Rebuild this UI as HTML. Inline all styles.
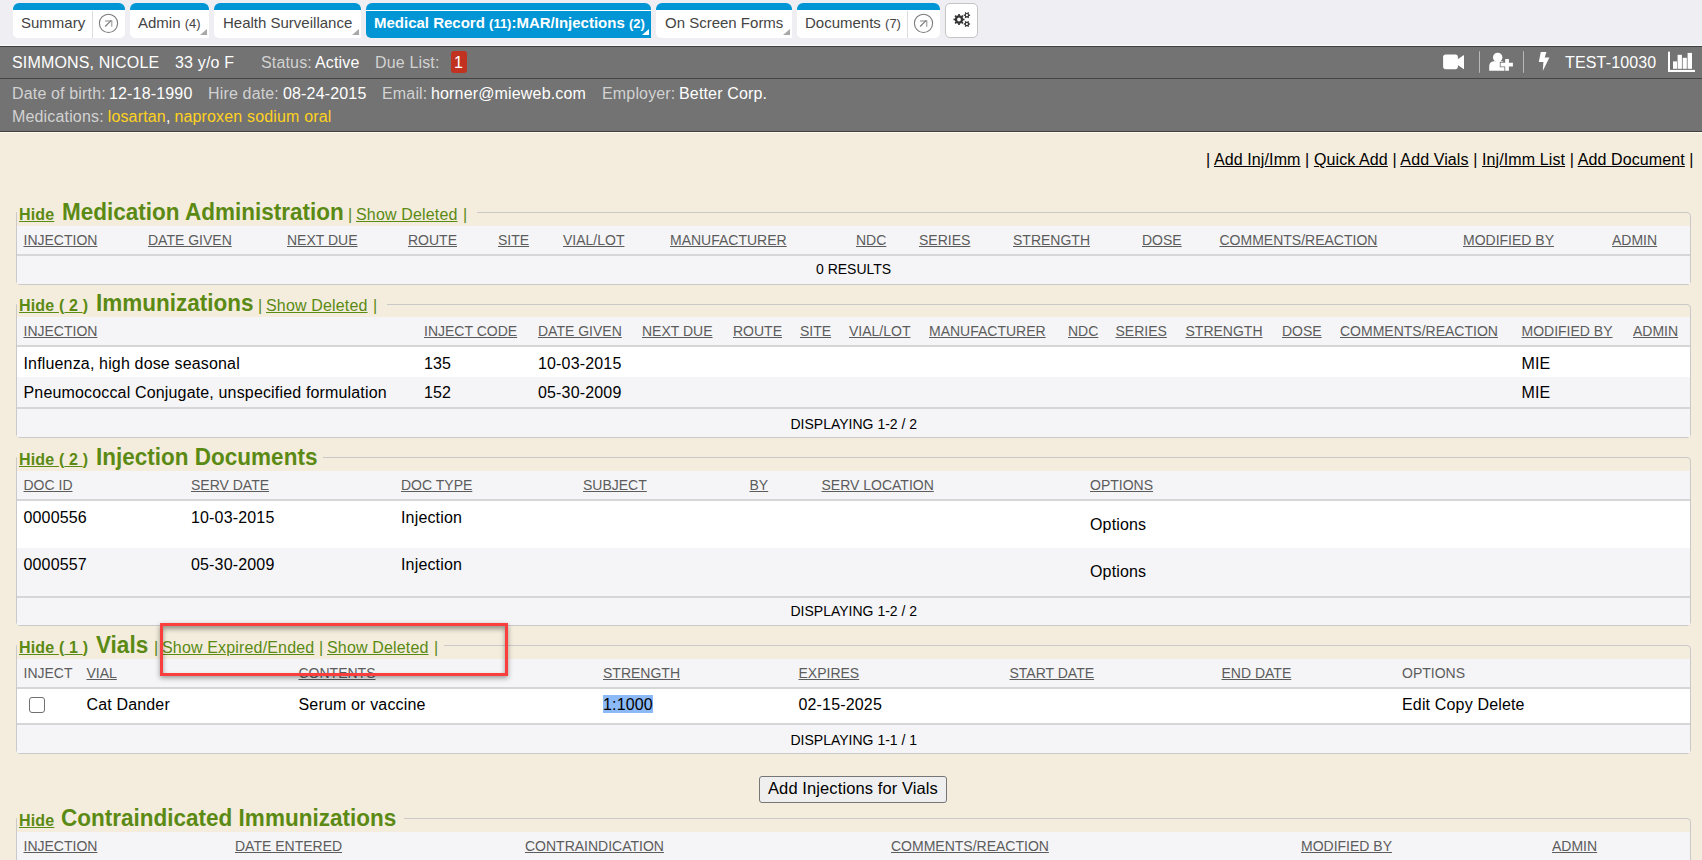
<!DOCTYPE html>
<html><head><meta charset="utf-8"><style>
html,body{margin:0;padding:0;width:1702px;height:860px;overflow:hidden;background:#f4eddd;font-family:"Liberation Sans",sans-serif;}
.t{position:absolute;white-space:nowrap;}
.r{position:absolute;}
u{text-decoration:underline;}
</style></head><body>
<div class="r" style="left:0px;top:0px;width:1702px;height:45px;background:#efeef3;"></div>
<div class="r" style="left:0px;top:45px;width:1702px;height:1px;background:#fbfbfd;"></div>
<div class="r" style="left:13px;top:3px;width:112px;height:35px;background:#fff;border-radius:6px 6px 5px 5px;overflow:hidden;"></div>
<div class="r" style="left:13px;top:3px;width:112px;height:7px;background:#0096d6;border-radius:6px 6px 0 0;"></div>
<div class="r" style="left:92px;top:11px;width:1px;height:27px;background:#dcdcdc;"></div>
<svg class="r" style="left:98.0px;top:13px" width="21" height="21" viewBox="0 0 21 21"><circle cx="10.5" cy="10.35" r="9.1" fill="none" stroke="#7a7a7a" stroke-width="1.1"/><path d="M7.1 7.9 H13.7 V13.7" fill="none" stroke="#b0b0b0" stroke-width="1.5"/><path d="M7.1 13.5 L13.3 7.3" fill="none" stroke="#7a7a7a" stroke-width="1.1"/></svg>

<div class="t" style="left:21px;top:15px;font-size:15px;line-height:15px;color:#444;">Summary</div>
<div class="r" style="left:130px;top:3px;width:79px;height:35px;background:#fff;border-radius:6px 6px 0px 5px;overflow:hidden;"></div>
<div class="r" style="left:130px;top:3px;width:79px;height:7px;background:#0096d6;border-radius:6px 6px 0 0;"></div>
<div class="r" style="left:200px;top:29px;width:0;height:0;border-left:7px solid transparent;border-bottom:6px solid #a8a8a8;"></div>

<div class="t" style="left:138px;top:15px;font-size:15px;line-height:15px;color:#444;">Admin <span style="font-size:13px">(4)</span></div>
<div class="r" style="left:214px;top:3px;width:147px;height:35px;background:#fff;border-radius:6px 6px 0px 5px;overflow:hidden;"></div>
<div class="r" style="left:214px;top:3px;width:147px;height:7px;background:#0096d6;border-radius:6px 6px 0 0;"></div>
<div class="r" style="left:352px;top:29px;width:0;height:0;border-left:7px solid transparent;border-bottom:6px solid #a8a8a8;"></div>

<div class="t" style="left:223px;top:15px;font-size:15px;line-height:15px;color:#444;">Health Surveillance</div>
<div class="r" style="left:366px;top:3px;width:285px;height:35px;background:#0096d6;border-radius:6px 6px 0px 5px;overflow:hidden;"></div>
<div class="r" style="left:366px;top:10px;width:285px;height:1px;background:#fff;"></div>
<div class="r" style="left:642px;top:29px;width:0;height:0;border-left:7px solid transparent;border-bottom:6px solid #fff;"></div>

<div class="t" style="left:374px;top:15px;font-size:15px;line-height:15px;color:#fff;font-weight:bold;">Medical Record <span style="font-size:13px">(11)</span>:MAR/Injections <span style="font-size:13px">(2)</span></div>
<div class="r" style="left:656px;top:3px;width:136px;height:35px;background:#fff;border-radius:6px 6px 0px 5px;overflow:hidden;"></div>
<div class="r" style="left:656px;top:3px;width:136px;height:7px;background:#0096d6;border-radius:6px 6px 0 0;"></div>
<div class="r" style="left:783px;top:29px;width:0;height:0;border-left:7px solid transparent;border-bottom:6px solid #a8a8a8;"></div>

<div class="t" style="left:665px;top:15px;font-size:15px;line-height:15px;color:#444;">On Screen Forms</div>
<div class="r" style="left:797px;top:3px;width:143px;height:35px;background:#fff;border-radius:6px 6px 5px 5px;overflow:hidden;"></div>
<div class="r" style="left:797px;top:3px;width:143px;height:7px;background:#0096d6;border-radius:6px 6px 0 0;"></div>
<div class="r" style="left:907px;top:11px;width:1px;height:27px;background:#dcdcdc;"></div>
<svg class="r" style="left:913.0px;top:13px" width="21" height="21" viewBox="0 0 21 21"><circle cx="10.5" cy="10.35" r="9.1" fill="none" stroke="#7a7a7a" stroke-width="1.1"/><path d="M7.1 7.9 H13.7 V13.7" fill="none" stroke="#b0b0b0" stroke-width="1.5"/><path d="M7.1 13.5 L13.3 7.3" fill="none" stroke="#7a7a7a" stroke-width="1.1"/></svg>

<div class="t" style="left:805px;top:15px;font-size:15px;line-height:15px;color:#444;">Documents <span style="font-size:13px">(7)</span></div>
<div class="r" style="left:945px;top:3px;width:31px;height:33px;background:#fff;border:1px solid #c4c4c4;border-radius:5px;"></div>
<svg class="r" style="left:950px;top:8px" width="24" height="22" viewBox="0 0 24 22"><circle cx="9" cy="11.5" r="3.05" fill="none" stroke="#333" stroke-width="2.30"/><rect x="8.15" y="6.00" width="1.7" height="1.90" fill="#333" transform="rotate(0.0 9 11.5)"/><rect x="8.15" y="6.00" width="1.7" height="1.90" fill="#333" transform="rotate(45.0 9 11.5)"/><rect x="8.15" y="6.00" width="1.7" height="1.90" fill="#333" transform="rotate(90.0 9 11.5)"/><rect x="8.15" y="6.00" width="1.7" height="1.90" fill="#333" transform="rotate(135.0 9 11.5)"/><rect x="8.15" y="6.00" width="1.7" height="1.90" fill="#333" transform="rotate(180.0 9 11.5)"/><rect x="8.15" y="6.00" width="1.7" height="1.90" fill="#333" transform="rotate(225.0 9 11.5)"/><rect x="8.15" y="6.00" width="1.7" height="1.90" fill="#333" transform="rotate(270.0 9 11.5)"/><rect x="8.15" y="6.00" width="1.7" height="1.90" fill="#333" transform="rotate(315.0 9 11.5)"/><circle cx="16.9" cy="7.2" r="1.70" fill="none" stroke="#333" stroke-width="1.20"/><rect x="16.25" y="4.00" width="1.3" height="1.50" fill="#333" transform="rotate(30.0 16.9 7.2)"/><rect x="16.25" y="4.00" width="1.3" height="1.50" fill="#333" transform="rotate(90.0 16.9 7.2)"/><rect x="16.25" y="4.00" width="1.3" height="1.50" fill="#333" transform="rotate(150.0 16.9 7.2)"/><rect x="16.25" y="4.00" width="1.3" height="1.50" fill="#333" transform="rotate(210.0 16.9 7.2)"/><rect x="16.25" y="4.00" width="1.3" height="1.50" fill="#333" transform="rotate(270.0 16.9 7.2)"/><rect x="16.25" y="4.00" width="1.3" height="1.50" fill="#333" transform="rotate(330.0 16.9 7.2)"/><circle cx="16.9" cy="16" r="1.70" fill="none" stroke="#333" stroke-width="1.20"/><rect x="16.25" y="12.80" width="1.3" height="1.50" fill="#333" transform="rotate(30.0 16.9 16)"/><rect x="16.25" y="12.80" width="1.3" height="1.50" fill="#333" transform="rotate(90.0 16.9 16)"/><rect x="16.25" y="12.80" width="1.3" height="1.50" fill="#333" transform="rotate(150.0 16.9 16)"/><rect x="16.25" y="12.80" width="1.3" height="1.50" fill="#333" transform="rotate(210.0 16.9 16)"/><rect x="16.25" y="12.80" width="1.3" height="1.50" fill="#333" transform="rotate(270.0 16.9 16)"/><rect x="16.25" y="12.80" width="1.3" height="1.50" fill="#333" transform="rotate(330.0 16.9 16)"/></svg>
<div class="r" style="left:0px;top:46px;width:1702px;height:1px;background:#404040;"></div>
<div class="r" style="left:0px;top:47px;width:1702px;height:84px;background:#737373;"></div>
<div class="r" style="left:0px;top:78px;width:1702px;height:1px;background:#454545;"></div>
<div class="r" style="left:0px;top:131px;width:1702px;height:1px;background:#404040;"></div>
<div class="r" style="left:0px;top:132px;width:1702px;height:1px;background:#fffae9;"></div>
<div class="t" style="left:12px;top:55px;font-size:16px;line-height:16px;color:#fff;letter-spacing:0.16px;">SIMMONS, NICOLE</div>
<div class="t" style="left:175px;top:55px;font-size:16px;line-height:16px;color:#fff;letter-spacing:0.16px;">33 y/o F</div>
<div class="t" style="left:261px;top:55px;font-size:16px;line-height:16px;color:#d2d2d2;letter-spacing:0.16px;">Status:</div>
<div class="t" style="left:315px;top:55px;font-size:16px;line-height:16px;color:#fff;letter-spacing:0.16px;">Active</div>
<div class="t" style="left:375px;top:55px;font-size:16px;line-height:16px;color:#d2d2d2;letter-spacing:0.16px;">Due List:</div>
<div class="r" style="left:451px;top:51px;width:16px;height:22px;background:#c23220;border-radius:3px;"></div>
<div class="t" style="left:454px;top:55px;font-size:16px;line-height:16px;color:#fff;letter-spacing:0.16px;">1</div>
<div class="t" style="left:12px;top:86px;font-size:16px;line-height:16px;color:#d2d2d2;letter-spacing:0.16px;">Date of birth:</div>
<div class="t" style="left:109px;top:86px;font-size:16px;line-height:16px;color:#fff;letter-spacing:0.16px;">12-18-1990</div>
<div class="t" style="left:208px;top:86px;font-size:16px;line-height:16px;color:#d2d2d2;letter-spacing:0.16px;">Hire date:</div>
<div class="t" style="left:283px;top:86px;font-size:16px;line-height:16px;color:#fff;letter-spacing:0.16px;">08-24-2015</div>
<div class="t" style="left:382px;top:86px;font-size:16px;line-height:16px;color:#d2d2d2;letter-spacing:0.16px;">Email:</div>
<div class="t" style="left:431px;top:86px;font-size:16px;line-height:16px;color:#fff;letter-spacing:0.16px;">horner@mieweb.com</div>
<div class="t" style="left:602px;top:86px;font-size:16px;line-height:16px;color:#d2d2d2;letter-spacing:0.16px;">Employer:</div>
<div class="t" style="left:679px;top:86px;font-size:16px;line-height:16px;color:#fff;letter-spacing:0.16px;">Better Corp.</div>
<div class="t" style="left:12px;top:109px;font-size:16px;line-height:16px;color:#d2d2d2;letter-spacing:0.16px;">Medications:</div>
<div class="t" style="left:107.7px;top:109px;font-size:16px;line-height:16px;color:#d2d2d2;letter-spacing:0.16px;"><span style="color:#ffd21f">losartan</span><span style="color:#fff">,</span></div>
<div class="t" style="left:174.4px;top:109px;font-size:16px;line-height:16px;color:#ffd21f;letter-spacing:0.16px;">naproxen sodium oral</div>
<div class="t" style="left:1565px;top:55px;font-size:16px;line-height:16px;color:#fff;letter-spacing:0.16px;">TEST-10030</div>
<svg class="r" style="left:1438px;top:48px" width="264" height="28" viewBox="0 0 264 28">
<rect x="5.1" y="6.5" width="14.8" height="14.7" rx="2.6" fill="#fff"/>
<path d="M19.3 11.4 L26 7 V21.2 L19.3 16.8 Z" fill="#fff"/>
<rect x="41" y="3.2" width="1" height="21.6" fill="#b8b8b8"/>
<circle cx="59.7" cy="9.4" r="4.7" fill="#fff"/>
<path d="M51.2 22.7 V18.6 C51.2 15 53.2 13.3 57 13.3 H62.4 C64.6 13.3 66 13.9 67 15 V22.7 Z" fill="#fff"/>
<path d="M62.6 14.7 H74.9 V18.4 H62.6 Z M67.2 11 H70.9 V22.7 H67.2 Z" fill="#737373" stroke="#737373" stroke-width="1.6"/>
<path d="M62.6 14.7 H74.9 V18.4 H62.6 Z M67.2 11 H70.9 V22.7 H67.2 Z" fill="#fff"/>
<rect x="85" y="3.2" width="1" height="21.6" fill="#b8b8b8"/>
<path d="M102.8 4.1 L108.4 4.1 L106.7 9.4 L111.4 9.4 L104.8 22.9 L105.4 14 L100.8 14 Z" fill="#fff"/>
<rect x="230" y="3.7" width="2" height="20.3" fill="#fff"/>
<rect x="230" y="21.9" width="27" height="2.1" fill="#fff"/>
<rect x="235" y="13.4" width="4" height="7.4" fill="#fff"/>
<rect x="239.6" y="6.8" width="4.3" height="14" fill="#fff"/>
<rect x="244.7" y="9.8" width="4.1" height="11" fill="#fff"/>
<rect x="249.6" y="4.9" width="4.4" height="15.9" fill="#fff"/>
</svg>
<div class="r" style="left:0px;top:133px;width:1702px;height:727px;background:#f4eddd;"></div>
<div class="t" style="left:1206px;top:152px;font-size:16px;line-height:16px;color:#000;letter-spacing:0.16px;"><span style="letter-spacing:0.11px">| <u>Add Inj/Imm</u> | <u>Quick Add</u> | <u>Add Vials</u> | <u>Inj/Imm List</u> | <u>Add Document</u> |</span></div>
<div class="r" style="left:16px;top:212px;width:1675px;height:73px;border:1px solid #c9c9c9;border-radius:0 4px 4px 4px;box-sizing:border-box;"></div>
<div class="r" style="left:17px;top:210px;width:460px;height:6px;background:#f4eddd;"></div>
<div class="t" style="left:19px;top:207px;font-size:16px;line-height:16px;color:#5b8a14;font-weight:bold;letter-spacing:0.16px;"><u>Hide</u></div>
<div class="t" style="left:62px;top:201px;font-size:23.5px;line-height:23.5px;color:#5b8a14;font-weight:bold;transform:scaleX(0.958);transform-origin:0 0;">Medication Administration</div>
<div class="t" style="left:348px;top:207px;font-size:16px;line-height:16px;color:#5b8a14;letter-spacing:0.16px;">|</div>
<div class="t" style="left:356px;top:207px;font-size:16px;line-height:16px;color:#5b8a14;letter-spacing:0.16px;"><u>Show Deleted</u></div>
<div class="t" style="left:463px;top:207px;font-size:16px;line-height:16px;color:#5b8a14;letter-spacing:0.16px;">|</div>
<div class="r" style="left:17px;top:226px;width:1673px;height:28px;background:#f5f5f7;"></div>
<div class="r" style="left:17px;top:254px;width:1673px;height:2px;background:#d6d6d6;"></div>
<div class="r" style="left:17px;top:256px;width:1673px;height:28px;background:#f5f5f7;"></div>
<div class="t" style="left:23.5px;top:233px;font-size:14px;line-height:14px;color:#5c5c5c;text-decoration:underline;">INJECTION</div>
<div class="t" style="left:148px;top:233px;font-size:14px;line-height:14px;color:#5c5c5c;text-decoration:underline;">DATE GIVEN</div>
<div class="t" style="left:287px;top:233px;font-size:14px;line-height:14px;color:#5c5c5c;text-decoration:underline;">NEXT DUE</div>
<div class="t" style="left:408px;top:233px;font-size:14px;line-height:14px;color:#5c5c5c;text-decoration:underline;">ROUTE</div>
<div class="t" style="left:498px;top:233px;font-size:14px;line-height:14px;color:#5c5c5c;text-decoration:underline;">SITE</div>
<div class="t" style="left:563px;top:233px;font-size:14px;line-height:14px;color:#5c5c5c;text-decoration:underline;">VIAL/LOT</div>
<div class="t" style="left:670px;top:233px;font-size:14px;line-height:14px;color:#5c5c5c;text-decoration:underline;">MANUFACTURER</div>
<div class="t" style="left:856px;top:233px;font-size:14px;line-height:14px;color:#5c5c5c;text-decoration:underline;">NDC</div>
<div class="t" style="left:919px;top:233px;font-size:14px;line-height:14px;color:#5c5c5c;text-decoration:underline;">SERIES</div>
<div class="t" style="left:1013px;top:233px;font-size:14px;line-height:14px;color:#5c5c5c;text-decoration:underline;">STRENGTH</div>
<div class="t" style="left:1142px;top:233px;font-size:14px;line-height:14px;color:#5c5c5c;text-decoration:underline;">DOSE</div>
<div class="t" style="left:1219.5px;top:233px;font-size:14px;line-height:14px;color:#5c5c5c;text-decoration:underline;">COMMENTS/REACTION</div>
<div class="t" style="left:1463px;top:233px;font-size:14px;line-height:14px;color:#5c5c5c;text-decoration:underline;">MODIFIED BY</div>
<div class="t" style="left:1612px;top:233px;font-size:14px;line-height:14px;color:#5c5c5c;text-decoration:underline;">ADMIN</div>
<div class="t" style="left:816px;top:262px;font-size:14px;line-height:14px;color:#000;">0 RESULTS</div>
<div class="r" style="left:16px;top:304px;width:1675px;height:134px;border:1px solid #c9c9c9;border-radius:0 4px 4px 4px;box-sizing:border-box;"></div>
<div class="r" style="left:17px;top:302px;width:370px;height:6px;background:#f4eddd;"></div>
<div class="t" style="left:19px;top:298px;font-size:16px;line-height:16px;color:#5b8a14;font-weight:bold;letter-spacing:0.16px;"><u>Hide </u>(<u> 2 </u>)</div>
<div class="t" style="left:96px;top:292px;font-size:23.5px;line-height:23.5px;color:#5b8a14;font-weight:bold;transform:scaleX(0.958);transform-origin:0 0;">Immunizations</div>
<div class="t" style="left:258px;top:298px;font-size:16px;line-height:16px;color:#5b8a14;letter-spacing:0.16px;">|</div>
<div class="t" style="left:266px;top:298px;font-size:16px;line-height:16px;color:#5b8a14;letter-spacing:0.16px;"><u>Show Deleted</u></div>
<div class="t" style="left:373px;top:298px;font-size:16px;line-height:16px;color:#5b8a14;letter-spacing:0.16px;">|</div>
<div class="r" style="left:17px;top:317px;width:1673px;height:28px;background:#f5f5f7;"></div>
<div class="r" style="left:17px;top:345px;width:1673px;height:2px;background:#d6d6d6;"></div>
<div class="r" style="left:17px;top:347px;width:1673px;height:30px;background:#fff;"></div>
<div class="r" style="left:17px;top:377px;width:1673px;height:30px;background:#f5f5f7;"></div>
<div class="r" style="left:17px;top:407px;width:1673px;height:2px;background:#d6d6d6;"></div>
<div class="r" style="left:17px;top:409px;width:1673px;height:28px;background:#f5f5f7;"></div>
<div class="t" style="left:23.5px;top:324px;font-size:14px;line-height:14px;color:#5c5c5c;text-decoration:underline;">INJECTION</div>
<div class="t" style="left:424px;top:324px;font-size:14px;line-height:14px;color:#5c5c5c;text-decoration:underline;">INJECT CODE</div>
<div class="t" style="left:538px;top:324px;font-size:14px;line-height:14px;color:#5c5c5c;text-decoration:underline;">DATE GIVEN</div>
<div class="t" style="left:642px;top:324px;font-size:14px;line-height:14px;color:#5c5c5c;text-decoration:underline;">NEXT DUE</div>
<div class="t" style="left:733px;top:324px;font-size:14px;line-height:14px;color:#5c5c5c;text-decoration:underline;">ROUTE</div>
<div class="t" style="left:800px;top:324px;font-size:14px;line-height:14px;color:#5c5c5c;text-decoration:underline;">SITE</div>
<div class="t" style="left:849px;top:324px;font-size:14px;line-height:14px;color:#5c5c5c;text-decoration:underline;">VIAL/LOT</div>
<div class="t" style="left:929px;top:324px;font-size:14px;line-height:14px;color:#5c5c5c;text-decoration:underline;">MANUFACTURER</div>
<div class="t" style="left:1068px;top:324px;font-size:14px;line-height:14px;color:#5c5c5c;text-decoration:underline;">NDC</div>
<div class="t" style="left:1115.5px;top:324px;font-size:14px;line-height:14px;color:#5c5c5c;text-decoration:underline;">SERIES</div>
<div class="t" style="left:1185.5px;top:324px;font-size:14px;line-height:14px;color:#5c5c5c;text-decoration:underline;">STRENGTH</div>
<div class="t" style="left:1282px;top:324px;font-size:14px;line-height:14px;color:#5c5c5c;text-decoration:underline;">DOSE</div>
<div class="t" style="left:1340px;top:324px;font-size:14px;line-height:14px;color:#5c5c5c;text-decoration:underline;">COMMENTS/REACTION</div>
<div class="t" style="left:1521.5px;top:324px;font-size:14px;line-height:14px;color:#5c5c5c;text-decoration:underline;">MODIFIED BY</div>
<div class="t" style="left:1633px;top:324px;font-size:14px;line-height:14px;color:#5c5c5c;text-decoration:underline;">ADMIN</div>
<div class="t" style="left:23.5px;top:356px;font-size:16px;line-height:16px;color:#000;letter-spacing:0.16px;">Influenza, high dose seasonal</div>
<div class="t" style="left:424px;top:356px;font-size:16px;line-height:16px;color:#000;letter-spacing:0.16px;">135</div>
<div class="t" style="left:538px;top:356px;font-size:16px;line-height:16px;color:#000;letter-spacing:0.16px;">10-03-2015</div>
<div class="t" style="left:1521.5px;top:356px;font-size:16px;line-height:16px;color:#000;letter-spacing:0.16px;">MIE</div>
<div class="t" style="left:23.5px;top:385px;font-size:16px;line-height:16px;color:#000;letter-spacing:0.16px;">Pneumococcal Conjugate, unspecified formulation</div>
<div class="t" style="left:424px;top:385px;font-size:16px;line-height:16px;color:#000;letter-spacing:0.16px;">152</div>
<div class="t" style="left:538px;top:385px;font-size:16px;line-height:16px;color:#000;letter-spacing:0.16px;">05-30-2009</div>
<div class="t" style="left:1521.5px;top:385px;font-size:16px;line-height:16px;color:#000;letter-spacing:0.16px;">MIE</div>
<div class="t" style="left:790.5px;top:417px;font-size:14px;line-height:14px;color:#000;">DISPLAYING 1-2 / 2</div>
<div class="r" style="left:16px;top:457px;width:1675px;height:169px;border:1px solid #c9c9c9;border-radius:0 4px 4px 4px;box-sizing:border-box;"></div>
<div class="r" style="left:17px;top:455px;width:306px;height:6px;background:#f4eddd;"></div>
<div class="t" style="left:19px;top:452px;font-size:16px;line-height:16px;color:#5b8a14;font-weight:bold;letter-spacing:0.16px;"><u>Hide </u>(<u> 2 </u>)</div>
<div class="t" style="left:96px;top:446px;font-size:23.5px;line-height:23.5px;color:#5b8a14;font-weight:bold;transform:scaleX(0.958);transform-origin:0 0;">Injection Documents</div>
<div class="r" style="left:17px;top:471px;width:1673px;height:28px;background:#f5f5f7;"></div>
<div class="r" style="left:17px;top:499px;width:1673px;height:2px;background:#d6d6d6;"></div>
<div class="r" style="left:17px;top:501px;width:1673px;height:47px;background:#fff;"></div>
<div class="r" style="left:17px;top:548px;width:1673px;height:48px;background:#f5f5f7;"></div>
<div class="r" style="left:17px;top:596px;width:1673px;height:2px;background:#d6d6d6;"></div>
<div class="r" style="left:17px;top:598px;width:1673px;height:27px;background:#f5f5f7;"></div>
<div class="t" style="left:23.5px;top:478px;font-size:14px;line-height:14px;color:#5c5c5c;text-decoration:underline;">DOC ID</div>
<div class="t" style="left:191px;top:478px;font-size:14px;line-height:14px;color:#5c5c5c;text-decoration:underline;">SERV DATE</div>
<div class="t" style="left:401px;top:478px;font-size:14px;line-height:14px;color:#5c5c5c;text-decoration:underline;">DOC TYPE</div>
<div class="t" style="left:583px;top:478px;font-size:14px;line-height:14px;color:#5c5c5c;text-decoration:underline;">SUBJECT</div>
<div class="t" style="left:749.5px;top:478px;font-size:14px;line-height:14px;color:#5c5c5c;text-decoration:underline;">BY</div>
<div class="t" style="left:821.5px;top:478px;font-size:14px;line-height:14px;color:#5c5c5c;text-decoration:underline;">SERV LOCATION</div>
<div class="t" style="left:1090px;top:478px;font-size:14px;line-height:14px;color:#5c5c5c;text-decoration:underline;">OPTIONS</div>
<div class="t" style="left:23.5px;top:509.5px;font-size:16px;line-height:16px;color:#000;letter-spacing:0.16px;">0000556</div>
<div class="t" style="left:191px;top:509.5px;font-size:16px;line-height:16px;color:#000;letter-spacing:0.16px;">10-03-2015</div>
<div class="t" style="left:401px;top:509.5px;font-size:16px;line-height:16px;color:#000;letter-spacing:0.16px;">Injection</div>
<div class="t" style="left:23.5px;top:556.5px;font-size:16px;line-height:16px;color:#000;letter-spacing:0.16px;">0000557</div>
<div class="t" style="left:191px;top:556.5px;font-size:16px;line-height:16px;color:#000;letter-spacing:0.16px;">05-30-2009</div>
<div class="t" style="left:401px;top:556.5px;font-size:16px;line-height:16px;color:#000;letter-spacing:0.16px;">Injection</div>
<div class="t" style="left:1090px;top:517px;font-size:16px;line-height:16px;color:#000;letter-spacing:0.16px;">Options</div>
<div class="t" style="left:1090px;top:564px;font-size:16px;line-height:16px;color:#000;letter-spacing:0.16px;">Options</div>
<div class="t" style="left:790.5px;top:604px;font-size:14px;line-height:14px;color:#000;">DISPLAYING 1-2 / 2</div>
<div class="r" style="left:16px;top:645px;width:1675px;height:109px;border:1px solid #c9c9c9;border-radius:0 4px 4px 4px;box-sizing:border-box;"></div>
<div class="r" style="left:17px;top:643px;width:427px;height:6px;background:#f4eddd;"></div>
<div class="t" style="left:19px;top:640px;font-size:16px;line-height:16px;color:#5b8a14;font-weight:bold;letter-spacing:0.16px;"><u>Hide </u>(<u> 1 </u>)</div>
<div class="t" style="left:96px;top:634px;font-size:23.5px;line-height:23.5px;color:#5b8a14;font-weight:bold;transform:scaleX(0.958);transform-origin:0 0;">Vials</div>
<div class="t" style="left:154px;top:640px;font-size:16px;line-height:16px;color:#5b8a14;letter-spacing:0.16px;">|</div>
<div class="t" style="left:162px;top:640px;font-size:16px;line-height:16px;color:#5b8a14;letter-spacing:0.16px;"><u>Show Expired/Ended</u></div>
<div class="t" style="left:319px;top:640px;font-size:16px;line-height:16px;color:#5b8a14;letter-spacing:0.16px;">|</div>
<div class="t" style="left:327px;top:640px;font-size:16px;line-height:16px;color:#5b8a14;letter-spacing:0.16px;"><u>Show Deleted</u></div>
<div class="t" style="left:434px;top:640px;font-size:16px;line-height:16px;color:#5b8a14;letter-spacing:0.16px;">|</div>
<div class="r" style="left:17px;top:659px;width:1673px;height:28px;background:#f5f5f7;"></div>
<div class="r" style="left:17px;top:687px;width:1673px;height:2px;background:#d6d6d6;"></div>
<div class="r" style="left:17px;top:689px;width:1673px;height:34px;background:#fff;"></div>
<div class="r" style="left:17px;top:723px;width:1673px;height:2px;background:#d6d6d6;"></div>
<div class="r" style="left:17px;top:725px;width:1673px;height:28px;background:#f5f5f7;"></div>
<div class="t" style="left:23.5px;top:666px;font-size:14px;line-height:14px;color:#5c5c5c;">INJECT</div>
<div class="t" style="left:86.5px;top:666px;font-size:14px;line-height:14px;color:#5c5c5c;text-decoration:underline;">VIAL</div>
<div class="t" style="left:298.5px;top:666px;font-size:14px;line-height:14px;color:#5c5c5c;text-decoration:underline;">CONTENTS</div>
<div class="t" style="left:603px;top:666px;font-size:14px;line-height:14px;color:#5c5c5c;text-decoration:underline;">STRENGTH</div>
<div class="t" style="left:798.5px;top:666px;font-size:14px;line-height:14px;color:#5c5c5c;text-decoration:underline;">EXPIRES</div>
<div class="t" style="left:1009.5px;top:666px;font-size:14px;line-height:14px;color:#5c5c5c;text-decoration:underline;">START DATE</div>
<div class="t" style="left:1221.5px;top:666px;font-size:14px;line-height:14px;color:#5c5c5c;text-decoration:underline;">END DATE</div>
<div class="t" style="left:1402px;top:666px;font-size:14px;line-height:14px;color:#5c5c5c;">OPTIONS</div>
<div class="r" style="left:603px;top:695px;width:50px;height:18px;background:#8cbaf8;"></div>
<div class="r" style="left:29px;top:697px;width:16px;height:16px;background:#fff;border:1.6px solid #707070;border-radius:3px;box-sizing:border-box;"></div>
<div class="t" style="left:86.5px;top:697px;font-size:16px;line-height:16px;color:#000;letter-spacing:0.16px;">Cat Dander</div>
<div class="t" style="left:298.5px;top:697px;font-size:16px;line-height:16px;color:#000;letter-spacing:0.16px;">Serum or vaccine</div>
<div class="t" style="left:603px;top:697px;font-size:16px;line-height:16px;color:#000;letter-spacing:0.16px;">1:1000</div>
<div class="t" style="left:798.5px;top:697px;font-size:16px;line-height:16px;color:#000;letter-spacing:0.16px;">02-15-2025</div>
<div class="t" style="left:1402px;top:697px;font-size:16px;line-height:16px;color:#000;letter-spacing:0.16px;">Edit Copy Delete</div>
<div class="t" style="left:790.5px;top:733px;font-size:14px;line-height:14px;color:#000;">DISPLAYING 1-1 / 1</div>
<div class="r" style="left:759px;top:776px;width:188px;height:27px;box-sizing:border-box;border:1px solid #767676;border-radius:3px;background:#efefef;"></div>
<div class="t" style="left:768px;top:780px;font-size:16.5px;line-height:16.5px;color:#000;letter-spacing:0.1px;">Add Injections for Vials</div>
<div class="r" style="left:16px;top:818px;width:1675px;height:82px;border:1px solid #c9c9c9;border-radius:0 4px 4px 4px;box-sizing:border-box;"></div>
<div class="r" style="left:17px;top:816px;width:387px;height:6px;background:#f4eddd;"></div>
<div class="t" style="left:19px;top:813px;font-size:16px;line-height:16px;color:#5b8a14;font-weight:bold;letter-spacing:0.16px;"><u>Hide</u></div>
<div class="t" style="left:61px;top:807px;font-size:23.5px;line-height:23.5px;color:#5b8a14;font-weight:bold;transform:scaleX(0.958);transform-origin:0 0;">Contraindicated Immunizations</div>
<div class="r" style="left:17px;top:832px;width:1673px;height:40px;background:#f5f5f7;"></div>
<div class="t" style="left:23.5px;top:839px;font-size:14px;line-height:14px;color:#5c5c5c;text-decoration:underline;">INJECTION</div>
<div class="t" style="left:235px;top:839px;font-size:14px;line-height:14px;color:#5c5c5c;text-decoration:underline;">DATE ENTERED</div>
<div class="t" style="left:525px;top:839px;font-size:14px;line-height:14px;color:#5c5c5c;text-decoration:underline;">CONTRAINDICATION</div>
<div class="t" style="left:891px;top:839px;font-size:14px;line-height:14px;color:#5c5c5c;text-decoration:underline;">COMMENTS/REACTION</div>
<div class="t" style="left:1301px;top:839px;font-size:14px;line-height:14px;color:#5c5c5c;text-decoration:underline;">MODIFIED BY</div>
<div class="t" style="left:1552px;top:839px;font-size:14px;line-height:14px;color:#5c5c5c;text-decoration:underline;">ADMIN</div>
<div class="r" style="left:160px;top:623px;width:348px;height:53px;box-sizing:border-box;border:3px solid #fa3d3d;box-shadow:0 2px 5px rgba(0,0,0,.38), inset 0 3px 5px rgba(0,0,0,.38);"></div>
</body></html>
